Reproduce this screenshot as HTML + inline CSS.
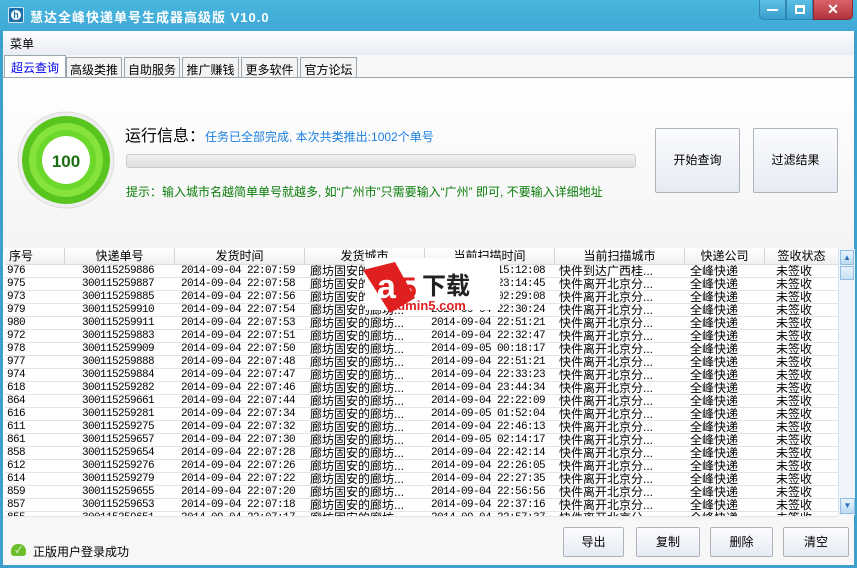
<!DOCTYPE html>
<html><head><meta charset="utf-8">
<style>
*{margin:0;padding:0;box-sizing:border-box}
body{width:857px;height:568px;overflow:hidden;background:#3d9fcc;font-family:"Liberation Sans","Noto Sans CJK SC",sans-serif;font-size:12px;color:#000;position:relative}
.abs{position:absolute}
#title{left:0;top:0;width:857px;height:31px;background:linear-gradient(#48b6de,#3fa9d6)}
#title .t{left:30px;top:7px;color:#fff;font-size:13px;font-weight:bold;letter-spacing:1px}
#win{left:3px;top:31px;width:851px;height:534px;background:#f7f7f7}
#menu{left:3px;top:31px;width:851px;height:24px;background:linear-gradient(#fdfdfe,#e8ecf5)}
.tab{top:57px;height:21px;border:1px solid #9aa6b0;border-bottom:none;background:#f4f4f4;font-size:12px;padding:3px 0 0 0;text-align:center}
#panel{left:3px;top:77px;width:851px;height:172px;background:linear-gradient(#fff,#f4f4f4);border-top:1px solid #9aa6b0}
.btn{border:1px solid #aeb4ba;border-radius:2px;background:linear-gradient(#fbfcfe,#e6eaf3);text-align:center;font-size:12px}
.mono{font-family:"Liberation Mono",monospace;font-size:11px;letter-spacing:-0.6px}
.row{position:absolute;left:5px;width:833px;height:13px;border-bottom:1px solid #e4e4e4;background:#fff;line-height:13px;white-space:nowrap}
.row span{position:absolute;top:0}
.hd{position:absolute;top:0;height:17px;line-height:16px;text-align:center;border-right:1px solid #d6d6d6}
</style></head><body>
<div id="title" class="abs">
 <div class="abs" style="left:8px;top:7px;width:16px;height:16px;background:#1b6fa8;border:1px solid #cfe8f5;border-radius:2px"><div style="margin:2px;width:10px;height:10px;border-radius:50%;background:#fff;color:#1b6fa8;font-size:9px;font-weight:bold;text-align:center;line-height:10px">h</div></div>
 <div class="t abs">慧达全峰快递单号生成器高级版 V10.0</div>
 <div class="abs" style="left:759px;top:0;width:27px;height:20px;background:linear-gradient(#5cc0e6,#3a9fcc);border:1px solid #2d86b3;border-top:none;border-radius:0 0 0 5px"><div style="margin:9px 7px;width:11px;height:2px;background:#fff"></div></div>
 <div class="abs" style="left:786px;top:0;width:27px;height:20px;background:linear-gradient(#5cc0e6,#3a9fcc);border:1px solid #2d86b3;border-top:none"><div style="margin:5px 8px;width:10px;height:9px;border:2px solid #fff;border-top-width:3px"></div></div>
 <div class="abs" style="left:813px;top:0;width:40px;height:20px;background:linear-gradient(#d9636a,#b0323a);border:1px solid #8c2a30;border-top:none;border-radius:0 0 5px 0;color:#fff;font-weight:bold;text-align:center;font-size:14px;line-height:18px">✕</div>
</div>
<div id="win" class="abs"></div>
<div id="menu" class="abs"><div class="abs" style="left:7px;top:4px">菜单</div></div>
<div class="abs" style="left:3px;top:55px;width:851px;height:22px;background:#f7f7f7"></div>
<div class="tab abs" style="left:4px;width:62px;top:55px;height:23px;background:#fff;color:#0000ee">超云查询</div>
<div class="tab abs" style="left:66px;width:56px">高级类推</div>
<div class="tab abs" style="left:124px;width:56px">自助服务</div>
<div class="tab abs" style="left:182px;width:57px">推广赚钱</div>
<div class="tab abs" style="left:241px;width:57px">更多软件</div>
<div class="tab abs" style="left:300px;width:57px">官方论坛</div>
<div id="panel" class="abs"></div>
<svg class="abs" style="left:16px;top:110px" width="100" height="100">
 <circle cx="50" cy="50" r="48" fill="#eee" stroke="#ddd"/>
 <circle cx="50" cy="50" r="44" fill="#57c51e"/>
 <circle cx="50" cy="50" r="37" fill="#86e33c"/>
 <circle cx="50" cy="50" r="30" fill="#6bd82a"/>
 <circle cx="50" cy="50" r="24" fill="#fff"/>
 <text x="50" y="57" text-anchor="middle" font-family="Liberation Sans" font-weight="bold" font-size="17" fill="#1a6d10">100</text>
</svg>
<div class="abs" style="left:125px;top:122px;font-size:16px">运行信息：<span style="font-size:12px;color:#1b7fe0">任务已全部完成, 本次共类推出:1002个单号</span></div>
<div class="abs" style="left:126px;top:154px;width:510px;height:14px;border:1px solid #ccc;border-radius:3px;background:linear-gradient(#f0f0f0,#dedede)"></div>
<div class="abs" style="left:126px;top:183px;width:506px;overflow:hidden;white-space:nowrap;font-size:12px;color:#0a7d0a">提示：输入城市名越简单单号就越多, 如“广州市”只需要输入“广州” 即可, 不要输入详细地址</div>
<div class="btn abs" style="left:655px;top:128px;width:85px;height:65px;line-height:63px">开始查询</div>
<div class="btn abs" style="left:753px;top:128px;width:85px;height:65px;line-height:63px">过滤结果</div>
<div class="abs" style="left:3px;top:249px;width:851px;height:266px;background:#fff"></div>
<div class="abs" style="left:5px;top:248px;width:833px;height:17px;background:linear-gradient(#fff,#f0f0f0);border-bottom:1px solid #ddd">
 <div class="hd" style="left:0;width:60px;text-align:left;padding-left:4px">序号</div>
 <div class="hd" style="left:60px;width:110px">快递单号</div>
 <div class="hd" style="left:170px;width:130px">发货时间</div>
 <div class="hd" style="left:300px;width:120px">发货城市</div>
 <div class="hd" style="left:420px;width:130px">当前扫描时间</div>
 <div class="hd" style="left:550px;width:130px">当前扫描城市</div>
 <div class="hd" style="left:680px;width:80px">快递公司</div>
 <div class="hd" style="left:760px;width:73px;border:none">签收状态</div>
</div>
<div id="rows"></div>
<div class="abs" style="left:838px;top:249px;width:17px;height:266px;background:#eef4fa;border-left:1px solid #d8e2ea">
 <div style="margin:1px;height:15px;background:linear-gradient(#e8f3fc,#bcdaf2);border:1px solid #92bde0;color:#2a6fb5;font-size:8px;text-align:center;line-height:13px">▲</div>
 <div style="margin:1px;height:14px;background:linear-gradient(#e8f3fc,#c8e0f4);border:1px solid #92bde0"></div>
 <div style="position:absolute;bottom:1px;left:1px;width:15px;height:16px;background:linear-gradient(#e8f3fc,#bcdaf2);border:1px solid #92bde0;color:#2a6fb5;font-size:8px;text-align:center;line-height:14px">▼</div>
</div>
<div class="btn abs" style="left:563px;top:527px;width:61px;height:30px;line-height:28px">导出</div>
<div class="btn abs" style="left:636px;top:527px;width:64px;height:30px;line-height:28px">复制</div>
<div class="btn abs" style="left:710px;top:527px;width:63px;height:30px;line-height:28px">删除</div>
<div class="btn abs" style="left:783px;top:527px;width:66px;height:30px;line-height:28px">清空</div>
<div class="abs" style="left:11px;top:544px;width:15px;height:12px;background:#6cbf2a;border-radius:7px 7px 3px 3px;color:#fff;font-size:9px;text-align:center;line-height:12px">✓</div>
<div class="abs" style="left:33px;top:543px">正版用户登录成功</div>
<script>
var d=[["976","300115259886","59","15:12:08","快件到达广西桂...",0,"04"],
["975","300115259887","58","23:14:45","快件离开北京分...",0,"04"],
["973","300115259885","56","02:29:08","快件离开北京分...",0,"05"],
["979","300115259910","54","22:30:24","快件离开北京分...",0,"04"],
["980","300115259911","53","22:51:21","快件离开北京分...",0,"04"],
["972","300115259883","51","22:32:47","快件离开北京分...",0,"04"],
["978","300115259909","50","00:18:17","快件离开北京分...",0,"05"],
["977","300115259888","48","22:51:21","快件离开北京分...",0,"04"],
["974","300115259884","47","22:33:23","快件离开北京分...",0,"04"],
["618","300115259282","46","23:44:34","快件离开北京分...",0,"04"],
["864","300115259661","44","22:22:09","快件离开北京分...",0,"04"],
["616","300115259281","34","01:52:04","快件离开北京分...",0,"05"],
["611","300115259275","32","22:46:13","快件离开北京分...",0,"04"],
["861","300115259657","30","02:14:17","快件离开北京分...",0,"05"],
["858","300115259654","28","22:42:14","快件离开北京分...",0,"04"],
["612","300115259276","26","22:26:05","快件离开北京分...",0,"04"],
["614","300115259279","22","22:27:35","快件离开北京分...",0,"04"],
["859","300115259655","20","22:56:56","快件离开北京分...",0,"04"],
["857","300115259653","18","22:37:16","快件离开北京分...",0,"04"],
["855","300115259651","17","22:57:37","快件离开北京分...",0,"04"]];
var h="";
d.forEach(function(r,i){var t=265+i*13;var hh=i==19?5:13;
h+='<div class="row" style="top:'+t+'px;height:'+hh+'px;overflow:hidden">'+
'<span class="mono" style="left:2px">'+r[0]+'</span>'+
'<span class="mono" style="left:77px">'+r[1]+'</span>'+
'<span class="mono" style="left:176px">2014-09-04 22:07:'+r[2]+'</span>'+
'<span style="left:305px">廊坊固安的廊坊...</span>'+
'<span class="mono" style="left:426px">2014-09-'+r[6]+' '+r[3]+'</span>'+
'<span style="left:554px">'+r[4]+'</span>'+
'<span style="left:685px">全峰快递</span>'+
'<span style="left:771px">未签收</span></div>';});
document.getElementById("rows").innerHTML=h;
</script>
<svg class="abs" style="left:355px;top:258px" width="145" height="60">
 <rect x="10" y="0" width="135" height="52" fill="#fff"/>
 <path d="M8 12 L40 4 L60 40 L35 55 Z" fill="#e02020"/>
 <text x="22" y="40" font-family="Liberation Sans" font-weight="bold" font-size="34" fill="#fff">a</text>
 <text x="45" y="40" font-family="Liberation Sans" font-weight="bold" font-size="30" fill="#e02020">5</text>
 <text x="67" y="36" font-family="Liberation Sans,Noto Sans CJK SC" font-weight="bold" font-size="24" fill="#222">下载</text>
 <text x="35" y="52" font-family="Liberation Sans" font-weight="bold" font-size="13" fill="#e02020">admin5.com</text>
</svg>
</body></html>
